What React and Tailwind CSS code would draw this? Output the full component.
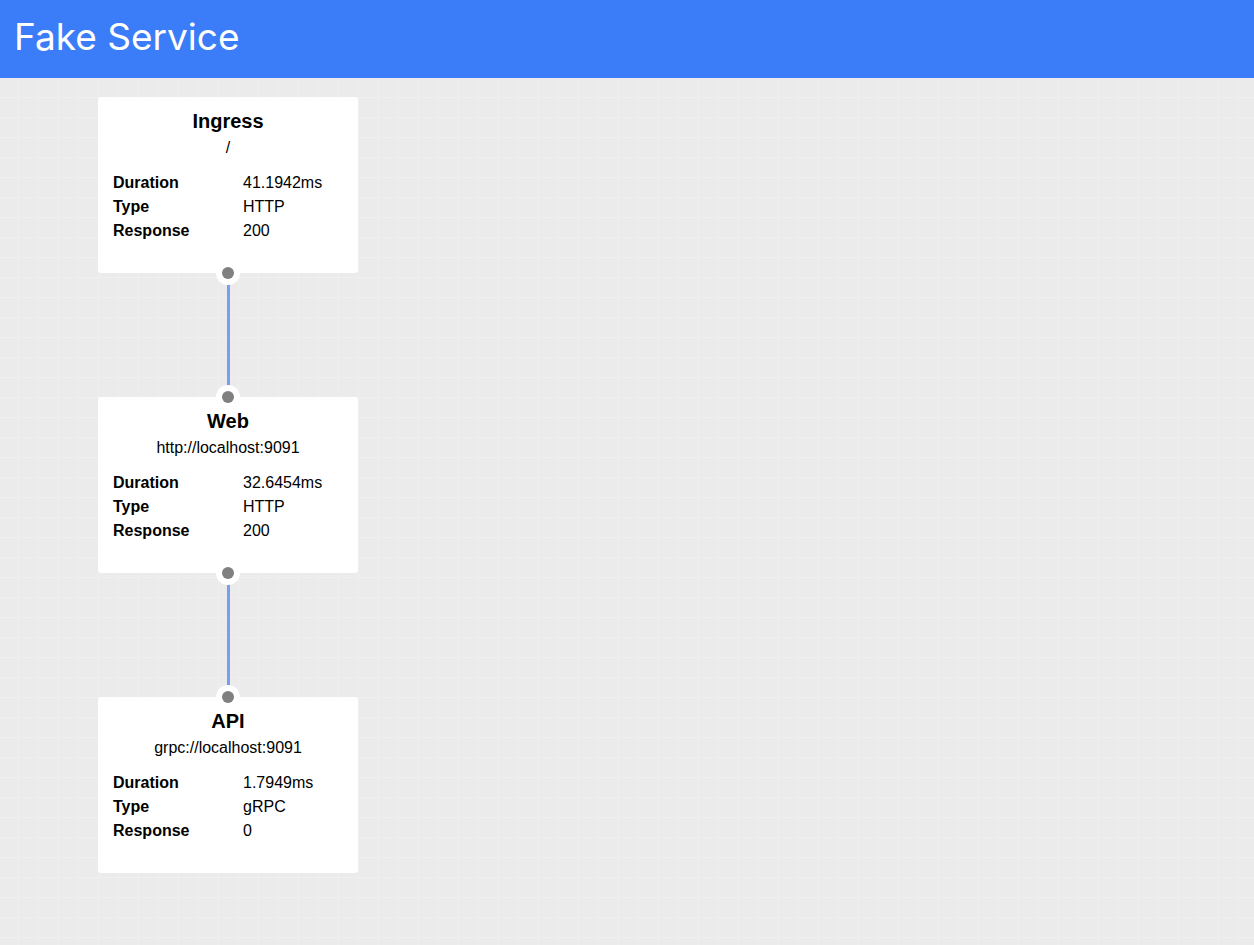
import React from "react";

const nodes = [
    { name: "Ingress", uri: "/", duration: "41.1942ms", type: "HTTP", response: "200" },
    { name: "Web", uri: "http://localhost:9091", duration: "32.6454ms", type: "HTTP", response: "200" },
    { name: "API", uri: "grpc://localhost:9091", duration: "1.7949ms", type: "gRPC", response: "0" },
];

// 연결점 (회색 점 + 흰 테두리)
function Handle({ className }) {
    return (
        <div className={`absolute left-1/2 -translate-x-1/2 w-6 h-6 rounded-full bg-white flex items-center justify-center ${className}`}>
            <div className="w-3 h-3 rounded-full bg-[#808080]"></div>
        </div>
    );
}

function NodeCard({ node, top, bottom }) {
    return (
        <div className="relative w-[260px] h-[176px] bg-white rounded-[3px] pt-[11px] px-[15px]">
            {top && <Handle className="-top-3" />}
            <div className="text-center text-[20px] leading-[26px] font-bold text-black">{node.name}</div>
            <div className="text-center text-[16px] leading-5 mt-[4px] text-black">{node.uri}</div>
            <div className="mt-[13px] text-[16px] leading-6 text-black">
                <div className="flex">
                    <span className="w-[130px] font-bold">Duration</span>
                    <span>{node.duration}</span>
                </div>
                <div className="flex">
                    <span className="w-[130px] font-bold">Type</span>
                    <span>{node.type}</span>
                </div>
                <div className="flex">
                    <span className="w-[130px] font-bold">Response</span>
                    <span>{node.response}</span>
                </div>
            </div>
            {bottom && <Handle className="-bottom-3 z-10" />}
        </div>
    );
}

function Edge() {
    return (
        <div className="w-[260px] h-[124px] flex justify-center">
            <div className="w-[3px] h-full bg-[#779ef0]"></div>
        </div>
    );
}

export default function App() {
    return (
        <div className="w-[1254px] h-[945px] flex flex-col font-['Liberation_Sans',Arial,sans-serif] overflow-hidden">
            {/* 머리줄 */}
            <div className="h-[78px] shrink-0 bg-[#3b7cf8] flex items-center px-[14px]">
                <span className="text-white text-[37px] font-['Inter',sans-serif] pb-1">Fake Service</span>
            </div>
            {/* 캔버스 */}
            <div className="flex-1 bg-[#ebebeb] bg-[linear-gradient(to_right,#efefef_1px,transparent_1px),linear-gradient(to_bottom,#efefef_1px,transparent_1px)] bg-[size:20px_20px] bg-[position:18px_19px] pl-[98px] pt-[19px]">
                {nodes.map((node, i) => (
                    <div key={node.name}>
                        <NodeCard node={node} top={i > 0} bottom={i < nodes.length - 1} />
                        {i < nodes.length - 1 && <Edge />}
                    </div>
                ))}
            </div>
        </div>
    );
}
